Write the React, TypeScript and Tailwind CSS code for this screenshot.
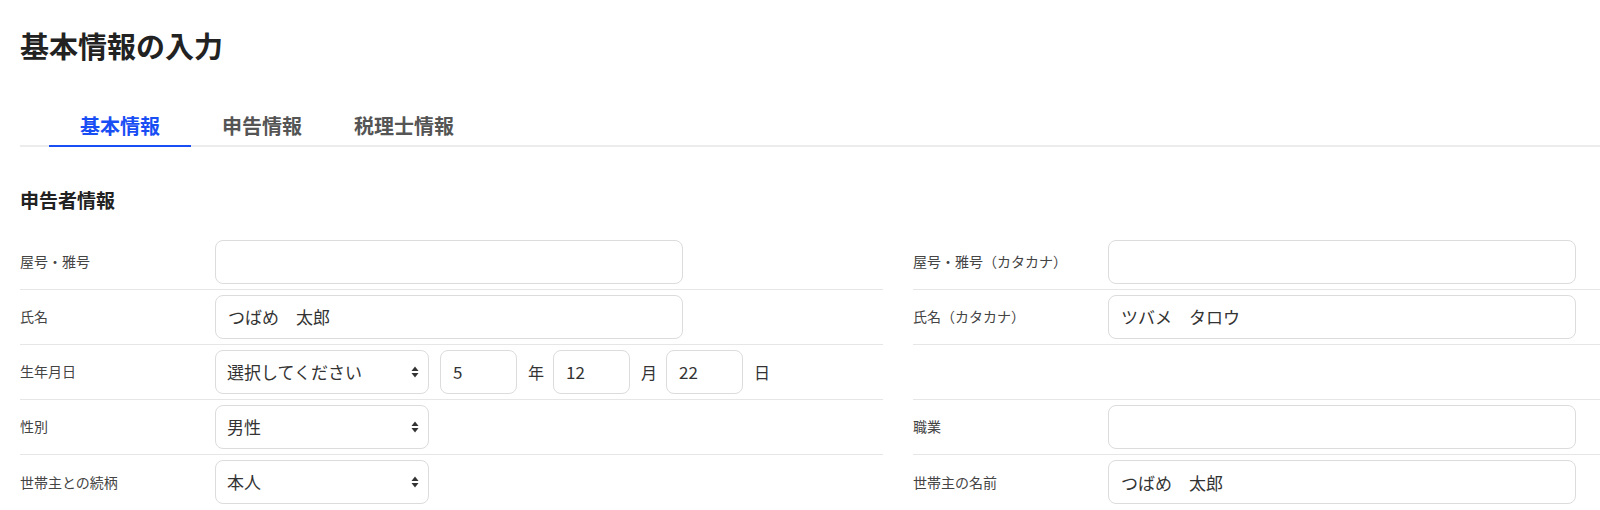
import React from "react";

const FONT = '"Noto Sans CJK JP", "Noto Sans", sans-serif';

function Arrows() {
  return (
    <svg width="8" height="12" viewBox="0 0 8 12" className="pointer-events-none absolute right-[10px] top-1/2 -translate-y-1/2">
      <path d="M4 0.5 L7.5 5 H0.5 Z" fill="#333" />
      <path d="M4 11.5 L7.5 7 H0.5 Z" fill="#333" />
    </svg>
  );
}

function TextBox({ value = "", width = "w-[468px]" }: { value?: string; width?: string }) {
  return (
    <input
      type="text"
      defaultValue={value}
      className={`${width} h-[44px] shrink-0 rounded-[8px] border border-[#dcdcdc] bg-white px-[12px] text-[17px] text-[#333] outline-none`}
    />
  );
}

function SelectBox({ value, options }: { value: string; options: string[] }) {
  return (
    <div className="relative w-[214px] shrink-0">
      <select
        defaultValue={value}
        className="h-[44px] w-full appearance-none rounded-[8px] border border-[#dcdcdc] bg-white pl-[11px] pr-[24px] text-[17px] text-[#333] outline-none"
      >
        {options.map((o) => (
          <option key={o}>{o}</option>
        ))}
      </select>
      <Arrows />
    </div>
  );
}

function Row({ label, last, children }: { label?: string; last?: boolean; children?: React.ReactNode }) {
  return (
    <div className={`flex h-[55px] items-center pb-[1px] ${last ? "" : "border-b border-[#e6e6e6]"}`}>
      <div className="w-[195px] shrink-0 text-[14px] text-[#444]">{label}</div>
      <div className="flex items-center">{children}</div>
    </div>
  );
}

export default function App() {
  const tabs = ["基本情報", "申告情報", "税理士情報"];

  return (
    <div className="h-[510px] w-[1600px] overflow-hidden bg-white" style={{ fontFamily: FONT }}>
      <h1 className="ml-[20px] mt-[25px] text-[29px] font-bold leading-[40px] text-[#222]">基本情報の入力</h1>

      <div className="ml-[20px] mt-[49px] flex border-b-2 border-[#ececec] pl-[29px]">
        {tabs.map((t, i) => (
          <div
            key={t}
            className={`-mb-[2px] w-[142px] border-b-2 pb-[7px] text-center text-[20px] font-bold leading-[24px] ${
              i === 0 ? "border-[#1a4ef5] text-[#1a4ef5]" : "border-transparent text-[#555]"
            }`}
          >
            {t}
          </div>
        ))}
      </div>

      <h2 className="ml-[20px] mt-[39px] text-[19px] font-bold leading-[28px] text-[#222]">申告者情報</h2>

      <div className="mt-[21px] flex gap-[30px] pl-[20px]">
        <div className="flex w-[863px] shrink-0 flex-col">
          <Row label="屋号・雅号">
            <TextBox />
          </Row>
          <Row label="氏名">
            <TextBox value="つばめ　太郎" />
          </Row>
          <Row label="生年月日">
            <div className="flex items-center gap-[10px] text-[16px] text-[#333]">
              <SelectBox value="選択してください" options={["選択してください", "昭和", "平成", "令和"]} />
              <div className="ml-[1px]">
                <TextBox value="5" width="w-[77px]" />
              </div>
              <span className="ml-[1px] w-[15px]">年</span>
              <TextBox value="12" width="w-[77px]" />
              <span className="ml-[1px] w-[15px]">月</span>
              <TextBox value="22" width="w-[77px]" />
              <span className="ml-[1px] w-[15px]">日</span>
            </div>
          </Row>
          <Row label="性別">
            <SelectBox value="男性" options={["男性", "女性"]} />
          </Row>
          <Row label="世帯主との続柄" last>
            <SelectBox value="本人" options={["本人", "夫", "妻", "父", "母"]} />
          </Row>
        </div>

        <div className="flex flex-1 flex-col">
          <Row label="屋号・雅号（カタカナ）">
            <TextBox />
          </Row>
          <Row label="氏名（カタカナ）">
            <TextBox value="ツバメ　タロウ" />
          </Row>
          <Row />
          <Row label="職業">
            <TextBox />
          </Row>
          <Row label="世帯主の名前" last>
            <TextBox value="つばめ　太郎" />
          </Row>
        </div>
      </div>
    </div>
  );
}
